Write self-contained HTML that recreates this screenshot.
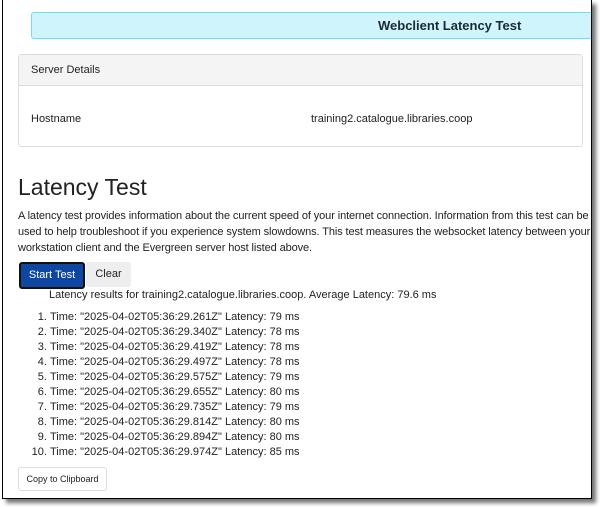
<!DOCTYPE html>
<html><head><style>
body{margin:0;width:600px;height:507px;background:#fff;font-family:"Liberation Sans",sans-serif;color:#222;overflow:hidden;position:relative}
.frame{position:absolute;left:2px;top:0;width:588px;height:498px;border:1px solid #000;border-top:none;box-shadow:4px 4px 4px rgba(0,0,0,.55);overflow:hidden;background:#fff}
.alert{position:absolute;left:28px;top:12px;width:600px;height:25px;background:#cff4fc;border:1px solid #6edff6;border-radius:3px}
.alert b{position:absolute;left:346px;top:5px;font-size:13px;color:#1a2a33}
.card{position:absolute;left:15px;top:54px;width:563px;height:91px;border:1px solid #ddd;border-radius:3px}
.ch{height:30px;background:#f4f4f4;border-bottom:1px solid #ddd;font-size:11px;line-height:30px;padding-left:12px}
.t{position:absolute;font-size:11px}
h1{position:absolute;left:15px;top:174px;margin:0;font-size:23px;font-weight:normal}
p{position:absolute;left:15px;top:208px;width:574px;margin:0;font-size:11px;line-height:16px;letter-spacing:-0.1px}
.b1{position:absolute;left:16px;top:262px;width:62px;height:23px;background:#0d47a1;border:2px solid #111;border-radius:3px;color:#fff;font-size:11px;line-height:23px;text-align:center}
.b2{position:absolute;left:83px;top:262px;width:45px;height:25px;background:#eee;border-radius:3px;font-size:11px;line-height:25px;text-align:center}
ol{position:absolute;left:15px;top:310px;margin:0;padding-left:32px;font-size:11px;line-height:15px}
.b3{position:absolute;left:15px;top:467px;width:87px;height:22px;border:1px solid #ddd;border-radius:3px;font-size:9px;line-height:22px;text-align:center}
</style></head><body>
<div class="frame">
<div class="alert"><b>Webclient Latency Test</b></div>
<div class="card"><div class="ch">Server Details</div>
<div class="t" style="left:12px;top:58px">Hostname</div>
<div class="t" style="left:292px;top:58px">training2.catalogue.libraries.coop</div></div>
<h1>Latency Test</h1>
<p>A latency test provides information about the current speed of your internet connection. Information from this test can be used to help troubleshoot if you experience system slowdowns. This test measures the websocket latency between your workstation client and the Evergreen server host listed above.</p>
<div class="b1">Start Test</div><div class="b2">Clear</div>
<div class="t" style="left:46px;top:289px">Latency results for training2.catalogue.libraries.coop. Average Latency: 79.6 ms</div>
<ol>
<li>Time: "2025-04-02T05:36:29.261Z" Latency: 79 ms</li>
<li>Time: "2025-04-02T05:36:29.340Z" Latency: 78 ms</li>
<li>Time: "2025-04-02T05:36:29.419Z" Latency: 78 ms</li>
<li>Time: "2025-04-02T05:36:29.497Z" Latency: 78 ms</li>
<li>Time: "2025-04-02T05:36:29.575Z" Latency: 79 ms</li>
<li>Time: "2025-04-02T05:36:29.655Z" Latency: 80 ms</li>
<li>Time: "2025-04-02T05:36:29.735Z" Latency: 79 ms</li>
<li>Time: "2025-04-02T05:36:29.814Z" Latency: 80 ms</li>
<li>Time: "2025-04-02T05:36:29.894Z" Latency: 80 ms</li>
<li>Time: "2025-04-02T05:36:29.974Z" Latency: 85 ms</li>
</ol>
<div class="b3">Copy to Clipboard</div>
</div>
</body></html>
